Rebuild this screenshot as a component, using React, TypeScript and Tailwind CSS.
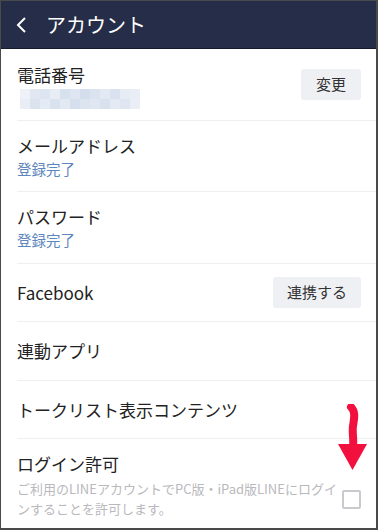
import React from 'react';

const font = { fontFamily: '"Noto Sans CJK JP", "Noto Sans", sans-serif' };

// pixelated phone number mosaic
const mosaic = [
  ['#eef2f8', '#e1e8f2', '#dde5f0', '#e8edf5', '#d7e1ee', '#dfe6f1', '#d3ddeb', '#dbe3ef', '#e2e9f3', '#d9e2ee', '#e6ecf4', '#e9eef6'],
  ['#e9eef6', '#dbe3ef', '#e5ebf4', '#d9e2ef', '#e3e9f3', '#d6dfed', '#dce4f0', '#e0e7f2', '#d8e1ee', '#e4eaf3', '#dfe6f1', '#eaeff6'],
];

const Row = ({ children, className = '' }: { children: React.ReactNode; className?: string }) => (
  <div className={`ml-4 pr-[15px] border-b border-[#efefef] flex items-center ${className}`}>{children}</div>
);

const Btn = ({ label, w }: { label: string; w: string }) => (
  <div className={`${w} h-[31px] bg-[#eef0f4] rounded-[3px] flex items-center justify-center text-[15px] text-[#333]`}>{label}</div>
);

const descLines = ['ご利用のLINEアカウントでPC版・iPad版LINEにログイ', 'ンすることを許可します。'];

export default function App() {
  return (
    <div
      className="relative w-[378px] h-[530px] bg-white border-t border-l border-r-2 border-b-2 border-[#4a4a4a] overflow-hidden flex flex-col"
      style={font}
    >
      {/* header */}
      <div className="h-[48px] bg-[#252d48] border-b border-[#161b2c] flex items-center shrink-0">
        <svg width="14" height="18" viewBox="0 0 14 18" className="ml-[14px]">
          <path d="M10 2 L3 9 L10 16" fill="none" stroke="white" strokeWidth="2" />
        </svg>
        <span className="ml-[17px] text-[20px] text-white">アカウント</span>
      </div>

      {/* phone */}
      <Row className="h-[72px] justify-between">
        <div className="flex flex-col pt-[2px]">
          <span className="text-[17px] leading-[24px] text-[#222]">電話番号</span>
          <div className="mt-[2px] ml-[3px] flex flex-col">
            {mosaic.map((r, i) => (
              <div key={i} className="flex">
                {r.map((c, j) => (
                  <div key={j} className="w-[10px] h-[10px]" style={{ background: c }} />
                ))}
              </div>
            ))}
          </div>
        </div>
        <Btn label="変更" w="w-[60px]" />
      </Row>

      {/* email */}
      <Row className="h-[71px]">
        <div className="flex flex-col">
          <span className="text-[17px] leading-[24px] text-[#222]">メールアドレス</span>
          <span className="text-[14.5px] leading-[21px] text-[#5d87bd]">登録完了</span>
        </div>
      </Row>

      {/* password */}
      <Row className="h-[72px]">
        <div className="flex flex-col">
          <span className="text-[17px] leading-[24px] text-[#222]">パスワード</span>
          <span className="text-[14.5px] leading-[21px] text-[#5d87bd]">登録完了</span>
        </div>
      </Row>

      {/* facebook */}
      <Row className="h-[58px] justify-between">
        <span className="text-[17px] text-[#222]">Facebook</span>
        <Btn label="連携する" w="w-[88px]" />
      </Row>

      <Row className="h-[59px]">
        <span className="text-[17px] text-[#222]">連動アプリ</span>
      </Row>

      <Row className="h-[58px]">
        <span className="text-[17px] text-[#222]">トークリスト表示コンテンツ</span>
      </Row>

      {/* login */}
      <div className="ml-4 pr-[15px] flex items-start justify-between pt-[13px]">
        <div className="flex flex-col">
          <span className="text-[17px] leading-[24px] text-[#222]">ログイン許可</span>
          <div className="mt-[3px] flex flex-col text-[13px] leading-[20px] text-[#b9b9bd]">
            {descLines.map((l) => (
              <span key={l} className="whitespace-nowrap">{l}</span>
            ))}
          </div>
        </div>
        <div className="shrink-0 mt-[38px] w-[19px] h-[19px] border-2 border-[#c9c9ce] rounded-[2px]" />
      </div>

      {/* red arrow annotation */}
      <svg className="absolute left-[335px] top-[403px]" width="34" height="68" viewBox="0 0 34 68">
        <path
          d="M15 3 C20 8 18 15 17 22 C16 30 18 35 17 42"
          fill="none"
          stroke="#f2103f"
          strokeWidth="8"
          strokeLinecap="round"
        />
        <path d="M2 40 L31 40 L16.5 66 Z" fill="#f2103f" />
      </svg>
    </div>
  );
}
